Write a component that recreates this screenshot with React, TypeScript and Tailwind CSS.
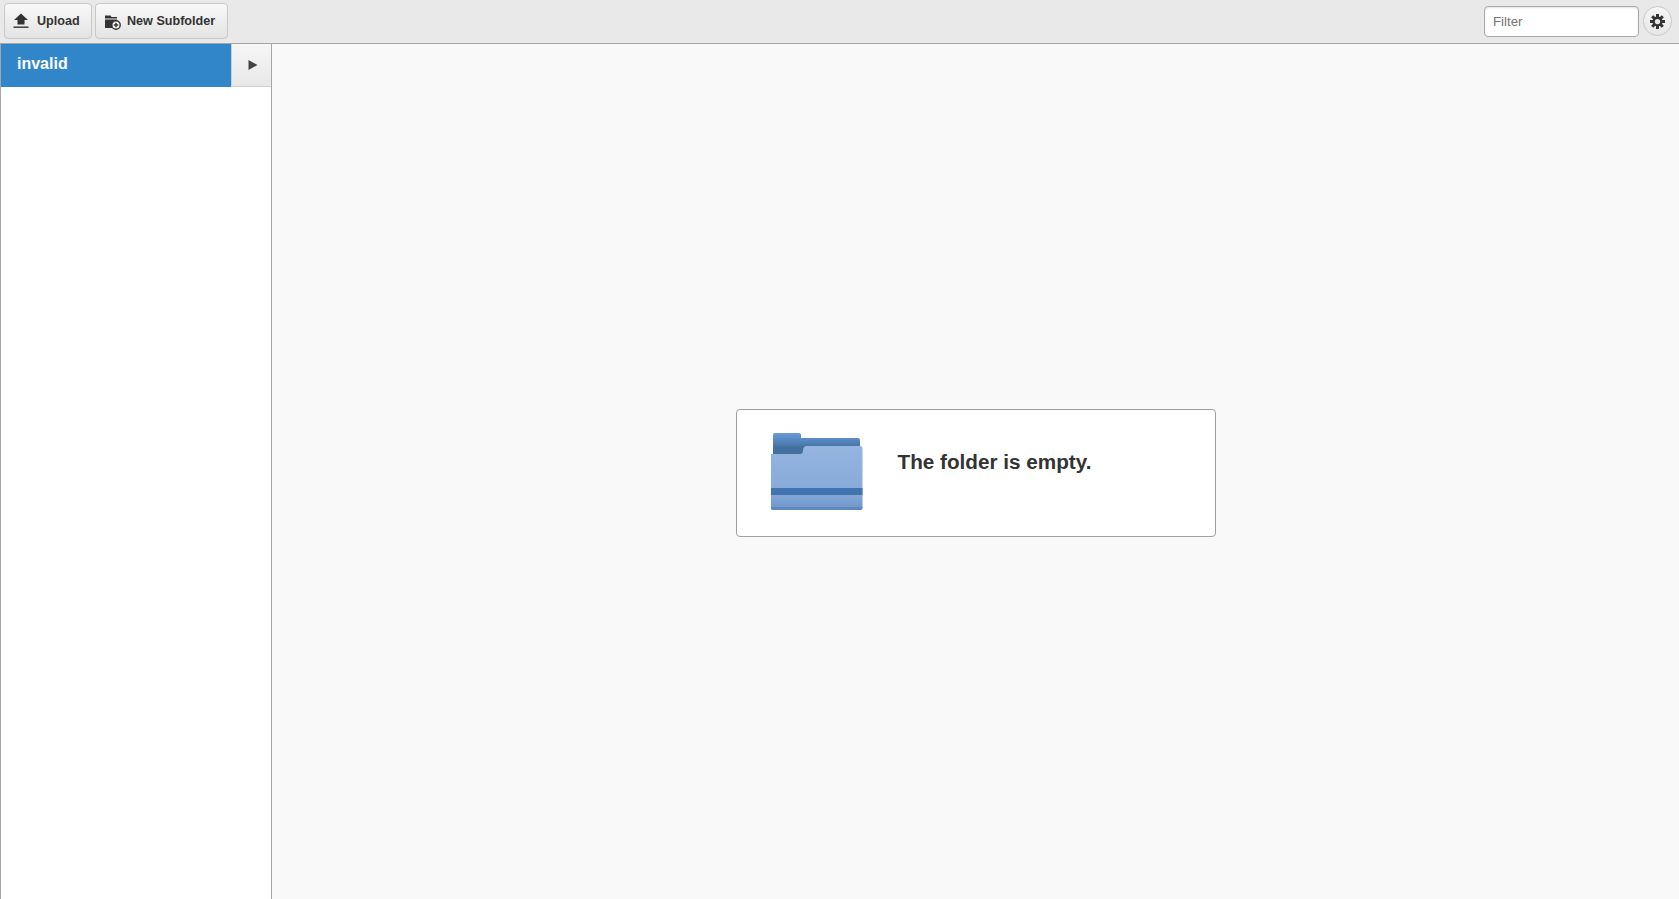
export default function App() {
  return (
    <div className="flex h-[899px] w-[1679px] flex-col overflow-hidden bg-white font-['Liberation_Sans',Arial,sans-serif] text-[#333]">
      <header className="flex h-[44px] shrink-0 items-start border-b border-[#a6a6a6] bg-[#e9e9e9]">
        <div className="flex gap-[3px] pl-[4px] pt-[3px]">
          <button className="flex h-[36px] w-[88px] items-center rounded-[4px] border border-[#c8c8c8] bg-gradient-to-b from-[#f8f8f8] to-[#e4e4e4] pl-[7px] pt-[1px] text-[12.6px] font-bold text-[#333]">
            <svg width="18" height="18" viewBox="0 0 18 18" className="mr-[7px] mb-[1px]">
              <path d="M9 1.500 L16 8 H12.500 V12.500 H5.500 V8 H2 Z" fill="#333" />
              <rect x="1.500" y="14.500" width="15" height="1.400" fill="#333" />
            </svg>
            Upload
          </button>
          <button className="flex h-[36px] w-[133px] items-center rounded-[4px] border border-[#c8c8c8] bg-gradient-to-b from-[#f8f8f8] to-[#e4e4e4] pl-[8px] pt-[1px] text-[12.6px] font-bold text-[#333]">
            <svg width="18" height="18" viewBox="0 0 18 18" className="mr-[5px] mt-[1px]">
              <path d="M1 2.500 H6.500 L7.500 4 H13 V5.500 H1 Z M1 6.500 H13 V9 A5 5 0 0 0 8 15 H1 Z" fill="#333" />
              <circle cx="12" cy="12" r="4.200" fill="#fff" stroke="#333" strokeWidth="1.400" />
              <path d="M12 9.700 V14.300 M9.700 12 H14.300" stroke="#333" strokeWidth="1.500" />
            </svg>
            New Subfolder
          </button>
        </div>
        <div className="ml-auto flex items-start gap-[4px] pr-[7px] pt-[6px]">
          <input
            placeholder="Filter"
            className="h-[31px] w-[155px] rounded-[4px] border border-[#a9a9a9] bg-white pl-[8px] text-[13.3px] text-[#333] shadow-[inset_0_1px_2px_rgba(0,0,0,0.12)] outline-none placeholder:text-[#757575]"
          />
          <button className="flex h-[30px] w-[29px] items-center justify-center rounded-full border border-[#c8c8c8] bg-gradient-to-b from-[#f6f6f6] to-[#e6e6e6]">
            <svg width="15" height="15" viewBox="0 0 16 16">
              <g fill="#333">
                <rect x="6.400" y="0" width="3.200" height="16" />
                <rect x="6.400" y="0" width="3.200" height="16" transform="rotate(45 8 8)" />
                <rect x="6.400" y="0" width="3.200" height="16" transform="rotate(90 8 8)" />
                <rect x="6.400" y="0" width="3.200" height="16" transform="rotate(135 8 8)" />
                <circle cx="8" cy="8" r="5.400" />
              </g>
              <circle cx="8" cy="8" r="2.800" fill="#e9e9e9" />
            </svg>
          </button>
        </div>
      </header>
      <div className="flex min-h-0 flex-1">
        <aside className="w-[272px] shrink-0 border-l border-r border-[#a6a6a6] bg-white">
          <div className="flex h-[43px]">
            <div className="flex w-[230px] items-center bg-[#3186ca] pb-[3px] pl-[16px] text-[16px] font-bold text-white">
              invalid
            </div>
            <button className="flex flex-1 items-center justify-center border-b border-l border-[#cfcfcf] bg-gradient-to-b from-[#f6f6f6] to-[#e8e8e8] pl-[3px]">
              <svg width="10" height="12" viewBox="0 0 10 12">
                <path d="M0.500 1 L9.500 6 L0.500 11 Z" fill="#444" />
              </svg>
            </button>
          </div>
        </aside>
        <main className="flex flex-1 items-center justify-center bg-[#f9f9f9] pt-[3px]">
          <div className="flex h-[128px] w-[480px] items-start rounded-[4px] border border-[#a0a0a0] bg-white pl-[33px] pt-[22px]">
            <svg width="94" height="80" viewBox="0 0 94 80" className="shrink-0">
              <defs>
                <linearGradient id="back" x1="0" y1="0" x2="0" y2="1">
                  <stop offset="0" stopColor="#6a9bda" />
                  <stop offset="1" stopColor="#42729f" />
                </linearGradient>
                <linearGradient id="front" x1="0" y1="0" x2="0" y2="1">
                  <stop offset="0" stopColor="#95b5e0" />
                  <stop offset="0.750" stopColor="#86a9d8" />
                  <stop offset="1" stopColor="#6d94c9" />
                </linearGradient>
              </defs>
              <path d="M3 3 Q3 1 5 1 H29 Q31 1 31 3 V6 H88 Q90 6 90 8 V16 H3 Z" fill="url(#back)" />
              <path d="M3 22 V14 H30 L34 14 V22 Z" fill="#44709f" />
              <path d="M1 22 H30 Q33 22 33 19 Q33 14 37 14 H90 Q92.500 14 92.500 16 V76 Q92.500 78 90 78 H3 Q1 78 1 76 Z" fill="url(#front)" />
              <rect x="1" y="56" width="91.500" height="7" fill="#4274b0" />
              <path d="M1 75 H92.500 V76 Q92.500 78 90 78 H3 Q1 78 1 76 Z" fill="#5f88bf" />
            </svg>
            <div className="ml-[34px] mt-[18px] text-[20.7px] font-bold leading-[24px] text-[#333]">The folder is empty.</div>
          </div>
        </main>
      </div>
    </div>
  );
}
